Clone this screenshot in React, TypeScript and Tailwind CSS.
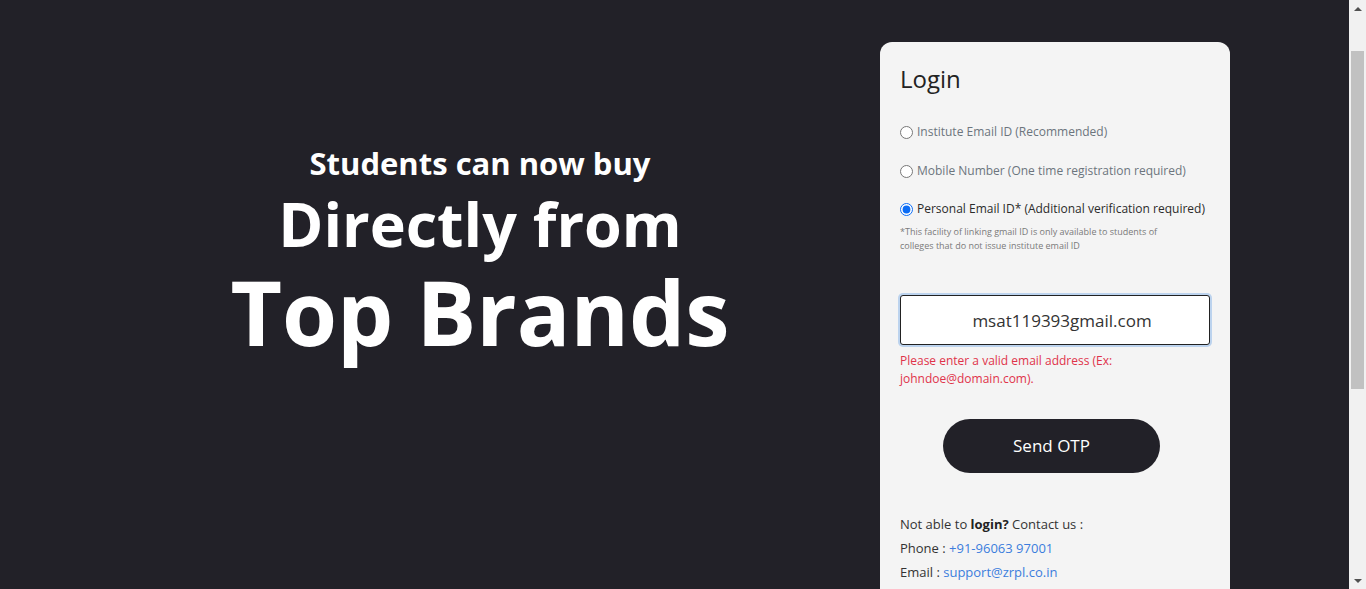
import React from 'react';

const font = { fontFamily: '"Open Sans", "Noto Sans", Arial, sans-serif' };

type RadioProps = { label: string; checked?: boolean; className?: string };

const RadioRow: React.FC<RadioProps> = ({ label, checked, className }) => (
  <label className={`flex items-center h-[20px] text-[12px] whitespace-nowrap ${checked ? 'text-[#2b2b2b]' : 'text-[#6c757d]'} ${className ?? ''}`}>
    <input
      type="radio"
      name="loginType"
      defaultChecked={checked}
      className="m-0 mr-[4px] w-[13px] h-[13px] accent-[#0b6cf5]"
    />
    {label}
  </label>
);

// browser scrollbar as seen in the screenshot
const FakeScrollbar = () => (
  <div className="fixed top-0 right-0 h-full w-[17px] bg-[#f1f1f1] flex flex-col items-center">
    <div className="h-[17px] flex items-center justify-center">
      <div className="w-0 h-0 border-l-[4px] border-r-[4px] border-b-[4px] border-l-transparent border-r-transparent border-b-[#505050]" />
    </div>
    <div className="mt-[34px] w-[13px] h-[338px] bg-[#c1c1c1]" />
    <div className="flex-1" />
    <div className="h-[17px] flex items-center justify-center">
      <div className="w-0 h-0 border-l-[4px] border-r-[4px] border-t-[4px] border-l-transparent border-r-transparent border-t-[#505050]" />
    </div>
  </div>
);

export default function App() {
  return (
    <div className="min-h-[966px] w-full bg-[#222128]" style={font}>
      <div className="flex">
        {/* Hero text */}
        <div className="w-[880px] pl-[80px] pt-[144px] text-center text-white font-bold">
          <h3 className="text-[31px] leading-[38px] mb-[6px]">Students can now buy</h3>
          <h2 className="text-[61px] leading-[72px]">Directly from</h2>
          <h1 className="text-[89px] leading-[100px] mt-[2px]">Top Brands</h1>
        </div>

        {/* Login card */}
        <div className="mt-[42px] w-[350px] rounded-[12px] bg-[#f4f4f4] px-[20px] pt-[20px] pb-[60px]">
          <h2 className="text-[24px] leading-[34px] text-[#222]">Login</h2>

          <div className="mt-[26px]">
            <RadioRow label="Institute Email ID (Recommended)" className="mb-[19px]" />
            <RadioRow label="Mobile Number (One time registration required)" className="mb-[18px]" />
            <RadioRow label="Personal Email ID* (Additional verification required)" checked />
          </div>

          <p className="mt-[6px] text-[9px] leading-[14px] text-[#7a7a7a]">
            *This facility of linking gmail ID is only available to students of
            <br />
            colleges that do not issue institute email ID
          </p>

          <input
            type="text"
            defaultValue="msat119393gmail.com"
            className="mt-[42px] block w-[310px] h-[50px] rounded-[3px] border border-[#222] bg-white pl-[14px] text-center text-[17px] text-[#333] outline-none shadow-[0_0_0_2px_rgba(120,170,230,0.45)]"
          />

          <p className="mt-[7px] text-[12px] leading-[18px] text-[#e0334a]">
            Please enter a valid email address (Ex:
            <br />
            johndoe@domain.com).
          </p>

          <div className="mt-[31px] flex justify-center pr-[7px]">
            <button className="w-[217px] h-[54px] rounded-full bg-[#222128] text-white text-[17px]">
              Send OTP
            </button>
          </div>

          <div className="mt-[39px] text-[13px] leading-[24px] text-[#333]">
            <p>
              Not able to <span className="font-bold text-[#222]">login?</span> Contact us :
            </p>
            <p>
              Phone : <a className="text-[#3b7ddd]">+91-96063 97001</a>
            </p>
            <p>
              Email : <a className="text-[#3b7ddd]">support@zrpl.co.in</a>
            </p>
          </div>
        </div>
      </div>
      <FakeScrollbar />
    </div>
  );
}
